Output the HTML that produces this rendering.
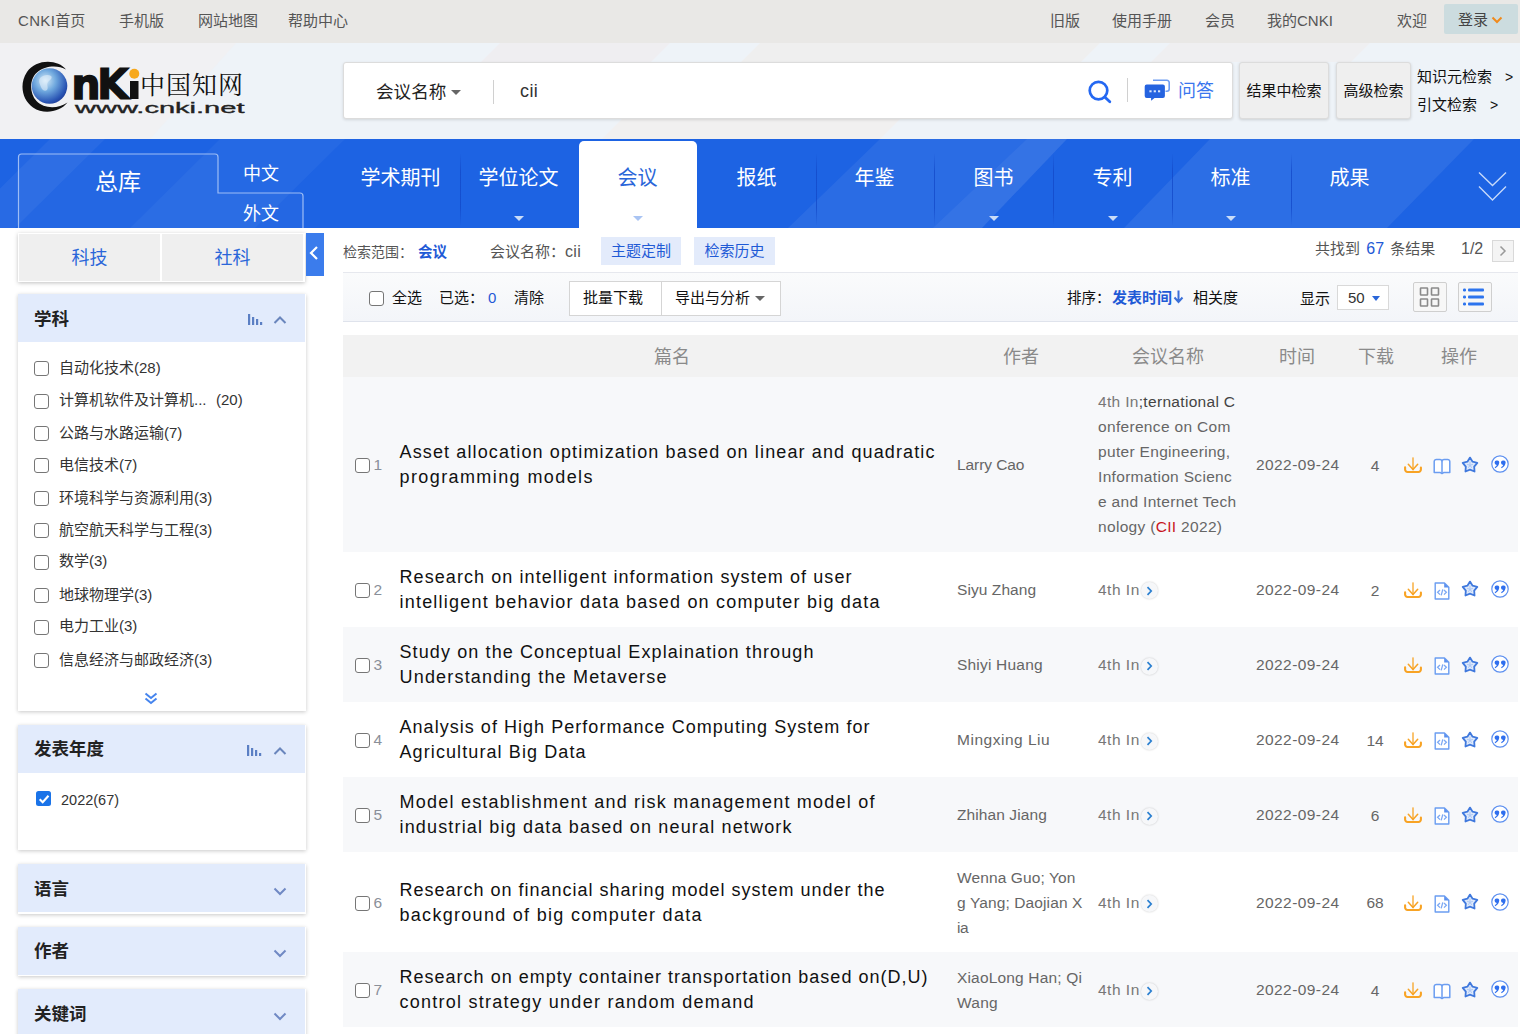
<!DOCTYPE html>
<html lang="zh-CN">
<head>
<meta charset="utf-8">
<title>CNKI</title>
<style>
*{box-sizing:border-box;margin:0;padding:0}
html,body{width:1520px;height:1034px;overflow:hidden;background:#fff}
body{font-family:"Liberation Sans","Noto Sans CJK SC",sans-serif;color:#333;position:relative}
.abs{position:absolute;white-space:nowrap}
/* top bar */
#top{position:absolute;left:0;top:0;width:1520px;height:43px;background:#e9e8e6}
#top>span{position:absolute;top:0;line-height:41px;font-size:15px;color:#555;white-space:nowrap}
/* header */
#hdr{position:absolute;left:0;top:43px;width:1520px;height:96px;background:#eef3f8}
#sbox{position:absolute;left:343px;top:62px;width:890px;height:57px;background:#fff;border:1px solid #dcdcdc;border-radius:3px;box-shadow:0 1px 3px rgba(0,0,0,.12)}
.hbtn{position:absolute;top:62px;height:57px;background:#efefef;border:1px solid #dcdcdc;border-radius:3px;box-shadow:0 1px 3px rgba(0,0,0,.15);font-size:15px;color:#111;text-align:center;line-height:55px;white-space:nowrap}
/* nav */
#nav{position:absolute;left:0;top:139px;width:1520px;height:89px;background:#1d63e3}
.nv{position:absolute;top:164px;width:119px;text-align:center;font-size:20px;color:#fff;line-height:28px;white-space:nowrap}
.sep{position:absolute;top:153px;width:1px;height:73px;background:linear-gradient(180deg,rgba(18,72,200,0),rgba(18,72,200,.75) 25%,rgba(18,72,200,.75) 75%,rgba(18,72,200,0))}
.tri{position:absolute;top:216px;width:0;height:0;border-left:5px solid transparent;border-right:5px solid transparent;border-top:5px solid #c9dcf8}
/* sidebar */
.panel{position:absolute;left:18px;width:288px;background:#fff;box-shadow:0 1px 4px rgba(0,0,0,.22)}
.phd{position:absolute;left:18px;width:287px;height:48px;background:#e2ebfc;font-size:17.5px;font-weight:bold;color:#222;line-height:48px;padding-left:16px;padding-top:.5px}
.cb{position:absolute;width:15px;height:15px;border:1.5px solid #767676;border-radius:3px;background:#fff}
.li{position:absolute;left:59px;font-size:15px;color:#333;line-height:20px;white-space:nowrap}
/* table */
.row{position:absolute;left:343px;width:1175px}
.g{background:#f7f8fa}
.tt{position:absolute;left:399.5px;font-size:18px;line-height:25px;color:#111;white-space:nowrap}
.au{position:absolute;left:957px;font-size:15.5px;line-height:25px;color:#666;white-space:nowrap}
.cf{position:absolute;left:1098px;font-size:15.5px;line-height:25px;color:#666;white-space:nowrap;letter-spacing:.32px}
.dt{position:absolute;left:1256px;font-size:15.5px;line-height:25px;color:#666;white-space:nowrap;letter-spacing:.42px}
.dl{position:absolute;left:1355px;width:40px;text-align:center;font-size:15.5px;line-height:25px;color:#666}
.no{position:absolute;left:373.5px;font-size:15.5px;color:#8a8f99;line-height:20px}
.th{position:absolute;top:335.5px;line-height:42px;font-size:18px;color:#8a8a8a;text-align:center;white-space:nowrap}
</style>
</head>
<body>
<!-- TOPBAR -->
<div id="top">
<span style="left:18px"><span style="letter-spacing:.35px">CNKI</span>首页</span><span style="left:119px">手机版</span><span style="left:198px">网站地图</span><span style="left:288px">帮助中心</span>
<span style="left:1050px">旧版</span><span style="left:1112px">使用手册</span><span style="left:1205px">会员</span><span style="left:1267px">我的CNKI</span><span style="left:1397px">欢迎</span>
<div style="position:absolute;left:1444px;top:4px;width:74px;height:30px;background:#ccdcdf;border-radius:2px"></div>
<span style="left:1458px;top:-1px;color:#444">登录</span>
<svg style="position:absolute;left:1491px;top:16px" width="12" height="8" viewBox="0 0 12 8"><path d="M1.5 1.5 L6 6 L10.5 1.5" fill="none" stroke="#f08a1c" stroke-width="2"/></svg>
</div>
<!-- HEADER -->
<div id="hdr"></div><svg class="abs" style="left:0;top:43px" width="1520" height="96" viewBox="0 0 1520 96"><polygon points="0,0 236,0 150,96 0,96" fill="#f1f1f3"/><polygon points="500,0 670,0 651,19 481,19" fill="#efeef1"/><polygon points="760,0 1100,0 1081,19 741,19" fill="#efefef"/><polygon points="1170,0 1370,0 1351,19 1151,19" fill="#efeff1"/><polygon points="622,76 900,76 880,96 602,96" fill="#f1f0f0"/></svg>
<!--LOGO-->
<svg class="abs" style="left:20px;top:58px" width="232" height="62" viewBox="20 58 232 62">
<defs><radialGradient id="gl" cx="38%" cy="35%" r="75%"><stop offset="0" stop-color="#d6ebf8"/><stop offset=".4" stop-color="#6fa8de"/><stop offset=".8" stop-color="#2a55b4"/><stop offset="1" stop-color="#1a338c"/></radialGradient></defs>
<path d="M66 69.5 C58 59 36 58.5 27 72 C19 84 22 100 33 107.5 C44 115 60 112 67.5 102.5 C58 109 44 109 36.5 101 C29 93 29.5 79 37 72.5 C45 65.5 58 65 66 69.5 Z" fill="#111"/>
<circle cx="49.5" cy="86" r="17.8" fill="url(#gl)"/>
<path d="M40 78 c3 -3 8 -4 11 -2 c2 2 -1 4 -3 6 c-2 3 1 5 -1 8 c-2 2 -5 0 -6 -3 c-1 -3 -3 -6 -1 -9 z" fill="#e8f3fb" opacity=".55"/>
<text x="71.5" y="99" font-family="'DejaVu Sans','Liberation Sans',sans-serif" font-weight="bold" font-size="43" fill="#111" stroke="#111" stroke-width="1.6" textLength="29" lengthAdjust="spacingAndGlyphs">n</text>
<text x="97" y="99" font-family="'DejaVu Sans','Liberation Sans',sans-serif" font-weight="bold" font-size="42.5" fill="#111" stroke="#111" stroke-width="1.2" textLength="32" lengthAdjust="spacingAndGlyphs">K</text>
<rect x="130" y="81" width="8.5" height="18" fill="#111"/>
<circle cx="134.3" cy="73.7" r="5" fill="#f7a81b"/>
<text x="140" y="94" font-family="'Noto Serif CJK SC',serif" font-weight="400" font-size="25" fill="#111" textLength="103" lengthAdjust="spacing">中国知网</text>
<text x="75" y="112.6" font-family="'Liberation Sans',sans-serif" font-weight="normal" font-size="15.5" fill="#222" stroke="#222" stroke-width=".35" textLength="169.5" lengthAdjust="spacingAndGlyphs">www.cnki.net</text>
</svg>
<!--SEARCH-->
<div id="sbox"></div>
<div class="abs" style="left:376px;top:78px;font-size:17.6px;line-height:28px;color:#222">会议名称</div>
<div class="abs" style="left:451px;top:90px;width:0;height:0;border-left:5px solid transparent;border-right:5px solid transparent;border-top:5px solid #666"></div>
<div class="abs" style="left:493px;top:80px;width:1px;height:24px;background:#d0d0d0"></div>
<div class="abs" style="left:520px;top:77px;font-size:18px;line-height:28px;color:#333;letter-spacing:.4px">cii</div>
<svg class="abs" style="left:1086px;top:78px" width="28" height="28" viewBox="0 0 28 28"><circle cx="12.5" cy="12.6" r="8.8" fill="none" stroke="#2468f2" stroke-width="2.7"/><path d="M19 19.2 L23.8 23.8" stroke="#2468f2" stroke-width="2.8" stroke-linecap="round"/></svg>
<div class="abs" style="left:1127px;top:78px;width:1px;height:24px;background:#d0d0d0"></div>
<svg class="abs" style="left:1143px;top:79px" width="28" height="23" viewBox="0 0 28 23"><path d="M10 1.3 h14 a2.2 2.2 0 0 1 2.2 2.2 v6.5 a2.2 2.2 0 0 1 -2.2 2.2 h-1.5" fill="none" stroke="#6d9cf2" stroke-width="1.6"/><path d="M3.7 5.6 h16.2 a2 2 0 0 1 2 2 v9.4 a2 2 0 0 1 -2 2 h-8.4 l-3.4 2.7 v-2.7 h-4.4 a2 2 0 0 1 -2 -2 v-9.4 a2 2 0 0 1 2 -2 z" fill="#2563e0"/><rect x="6.4" y="11.3" width="2.2" height="2" fill="#dbe7fc"/><rect x="10.7" y="11.3" width="2.2" height="2" fill="#dbe7fc"/><rect x="15" y="11.3" width="2.2" height="2" fill="#dbe7fc"/></svg>
<div class="abs" style="left:1178px;top:77px;font-size:18px;line-height:28px;color:#3a76ee">问答</div>
<div class="hbtn" style="left:1239px;width:90px">结果中检索</div>
<div class="hbtn" style="left:1336px;width:75px">高级检索</div>
<div class="abs" style="left:1417px;top:67px;font-size:15px;line-height:20px;color:#111">知识元检索</div><div class="abs" style="left:1505px;top:67px;font-size:14px;line-height:20px;color:#111">&gt;</div>
<div class="abs" style="left:1417px;top:95px;font-size:15px;line-height:20px;color:#111">引文检索</div><div class="abs" style="left:1490px;top:95px;font-size:14px;line-height:20px;color:#111">&gt;</div>
<!--NAV-->
<div id="nav"></div><svg class="abs" style="left:0;top:139px" width="1520" height="89" viewBox="0 0 1520 89"><g fill="#fff"><polygon points="-40,89 50,0 105,0 15,89" opacity=".05"/><polygon points="130,89 220,0 345,0 255,89" opacity=".04"/><polygon points="788,89 880,0 1067,0 982,89" opacity=".06"/><polygon points="933,89 1027,0 1067,0 982,89" opacity=".05"/><polygon points="1124,89 1210,0 1474,0 1387,89" opacity=".07"/></g></svg>
<svg class="abs" style="left:0;top:139px" width="320" height="89" viewBox="0 0 320 89"><path d="M18.5 89 V18 a3 3 0 0 1 3 -3 H215 a3 3 0 0 1 3 3 V54 H300 a3 3 0 0 1 3 3 V89" fill="rgba(255,255,255,.03)" stroke="#9dbdf5" stroke-width="1.2"/></svg>
<div class="abs" style="left:18px;top:166px;width:200px;text-align:center;font-size:23px;line-height:32px;color:#fff">总库</div>
<div class="abs" style="left:218px;top:161px;width:86px;text-align:center;font-size:18px;line-height:26px;color:#fff">中文</div>
<div class="abs" style="left:218px;top:201px;width:86px;text-align:center;font-size:18px;line-height:26px;color:#fff">外文</div>
<div class="abs" style="left:579px;top:141px;width:118px;height:87px;background:#fff;border-radius:5px 5px 0 0"></div>
<div class="nv" style="left:341px;color:#fff">学术期刊</div>
<div class="nv" style="left:459px;color:#fff">学位论文</div>
<div class="nv" style="left:578px;color:#2a66d9">会议</div>
<div class="nv" style="left:697px;color:#fff">报纸</div>
<div class="nv" style="left:815px;color:#fff">年鉴</div>
<div class="nv" style="left:934px;color:#fff">图书</div>
<div class="nv" style="left:1053px;color:#fff">专利</div>
<div class="nv" style="left:1171px;color:#fff">标准</div>
<div class="nv" style="left:1290px;color:#fff">成果</div>
<div class="sep" style="left:460px"></div>
<div class="sep" style="left:816px"></div>
<div class="sep" style="left:934px"></div>
<div class="sep" style="left:1053px"></div>
<div class="sep" style="left:1172px"></div>
<div class="sep" style="left:1291px"></div>
<div class="tri" style="left:514px"></div>
<div class="tri" style="left:989px"></div>
<div class="tri" style="left:1108px"></div>
<div class="tri" style="left:1226px"></div>
<div class="tri" style="left:633px;border-top-color:#a9c4f3"></div>
<svg class="abs" style="left:1476px;top:170px" width="32" height="32" viewBox="0 0 32 32"><path d="M3 2.5 L16.5 15.5 L30 2.5 M3 16.5 L16.5 30 L30 16.5" fill="none" stroke="#c6d9fa" stroke-width="1.4"/></svg>
<!--SIDEBAR-->
<div class="abs" style="left:18px;top:233px;width:287px;height:49px;background:#fff;box-shadow:0 1px 4px rgba(0,0,0,.25)"></div>
<div class="abs" style="left:19px;top:234px;width:141px;height:47px;background:#efefef;text-align:center;font-size:18px;line-height:48px;color:#2a66d9">科技</div>
<div class="abs" style="left:162px;top:234px;width:141px;height:47px;background:#efefef;text-align:center;font-size:18px;line-height:48px;color:#2a66d9">社科</div>
<div class="abs" style="left:306px;top:233px;width:18px;height:43px;background:#3b7cec"></div>
<svg class="abs" style="left:308px;top:245px" width="12" height="16" viewBox="0 0 12 16"><path d="M9 2 L3 8 L9 14" fill="none" stroke="#fff" stroke-width="2.2"/></svg>
<div class="panel" style="top:294px;height:417px"></div>
<div class="phd" style="top:294px">学科</div>
<svg class="abs" style="left:248px;top:314px" width="16" height="12" viewBox="0 0 16 12"><rect x="0" y="0" width="2.2" height="11" fill="#5b7fc4"/><rect x="4" y="3" width="2.2" height="8" fill="#5b7fc4"/><rect x="8" y="5" width="2.2" height="6" fill="#5b7fc4"/><rect x="12" y="8" width="2.2" height="3" fill="#5b7fc4"/></svg>
<svg class="abs" style="left:273px;top:315px" width="14" height="10" viewBox="0 0 14 10"><path d="M1.5 8 L7 2.5 L12.5 8" fill="none" stroke="#6a86bd" stroke-width="2"/></svg>
<div class="cb" style="left:34px;top:361.0px"></div><div class="li" style="top:357.5px">自动化技术(28)</div>
<div class="cb" style="left:34px;top:393.5px"></div><div class="li" style="top:390.0px">计算机软件及计算机...<span style="position:absolute;left:157px">(20)</span></div>
<div class="cb" style="left:34px;top:426.0px"></div><div class="li" style="top:422.5px">公路与水路运输(7)</div>
<div class="cb" style="left:34px;top:458.0px"></div><div class="li" style="top:454.5px">电信技术(7)</div>
<div class="cb" style="left:34px;top:491.0px"></div><div class="li" style="top:487.5px">环境科学与资源利用(3)</div>
<div class="cb" style="left:34px;top:523.0px"></div><div class="li" style="top:519.5px">航空航天科学与工程(3)</div>
<div class="cb" style="left:34px;top:554.9px"></div><div class="li" style="top:551.4px">数学(3)</div>
<div class="cb" style="left:34px;top:588.0px"></div><div class="li" style="top:584.5px">地球物理学(3)</div>
<div class="cb" style="left:34px;top:619.9px"></div><div class="li" style="top:616.4px">电力工业(3)</div>
<div class="cb" style="left:34px;top:653.0px"></div><div class="li" style="top:649.5px">信息经济与邮政经济(3)</div>
<svg class="abs" style="left:144px;top:692px" width="14" height="13" viewBox="0 0 14 13"><path d="M1.5 1.5 L7 6 L12.5 1.5 M1.5 6.5 L7 11 L12.5 6.5" fill="none" stroke="#4685ee" stroke-width="2"/></svg>
<div class="panel" style="top:724.7px;height:125.3px"></div>
<div class="phd" style="top:724.7px">发表年度</div>
<svg class="abs" style="left:247px;top:745px" width="16" height="12" viewBox="0 0 16 12"><rect x="0" y="0" width="2.2" height="11" fill="#5b7fc4"/><rect x="4" y="3" width="2.2" height="8" fill="#5b7fc4"/><rect x="8" y="5" width="2.2" height="6" fill="#5b7fc4"/><rect x="12" y="8" width="2.2" height="3" fill="#5b7fc4"/></svg>
<svg class="abs" style="left:273px;top:746px" width="14" height="10" viewBox="0 0 14 10"><path d="M1.5 8 L7 2.5 L12.5 8" fill="none" stroke="#6a86bd" stroke-width="2"/></svg>
<div class="abs" style="left:36.3px;top:791.3px;width:14.4px;height:14.4px;background:#1a73e8;border-radius:2.5px"></div><svg class="abs" style="left:36.5px;top:791.5px" width="14" height="14" viewBox="0 0 14 14"><path d="M2.7 7.3 L5.7 10.3 L11.5 3.7" fill="none" stroke="#fff" stroke-width="2.1"/></svg>
<div class="li" style="left:61px;top:789.7px;font-size:14.5px">2022(67)</div>
<div class="panel" style="top:864.3px;height:49.5px"></div><div class="phd" style="top:864.3px">语言</div>
<svg class="abs" style="left:273px;top:886px" width="14" height="10" viewBox="0 0 14 10"><path d="M1.5 2.5 L7 8 L12.5 2.5" fill="none" stroke="#7089c4" stroke-width="2"/></svg>
<div class="panel" style="top:926.6px;height:49.5px"></div><div class="phd" style="top:926.6px">作者</div>
<svg class="abs" style="left:273px;top:948px" width="14" height="10" viewBox="0 0 14 10"><path d="M1.5 2.5 L7 8 L12.5 2.5" fill="none" stroke="#7089c4" stroke-width="2"/></svg>
<div class="panel" style="top:989.3px;height:49.5px"></div><div class="phd" style="top:989.3px">关键词</div>
<svg class="abs" style="left:273px;top:1011px" width="14" height="10" viewBox="0 0 14 10"><path d="M1.5 2.5 L7 8 L12.5 2.5" fill="none" stroke="#7089c4" stroke-width="2"/></svg>
<!--MAIN-->
<div class="abs" style="left:343px;top:241.5px;font-size:14px;line-height:20px;color:#555">检索范围：<b style="color:#1f5ad6;font-size:14.5px;margin-left:5px">会议</b></div>
<div class="abs" style="left:490px;top:241.5px;font-size:15px;line-height:20px;color:#555">会议名称：<span style="font-size:16px;letter-spacing:.3px">cii</span></div>
<div class="abs" style="left:601px;top:237px;width:80px;height:28px;background:#e3ebfb;text-align:center;font-size:15px;line-height:28px;color:#1f5ad6">主题定制</div>
<div class="abs" style="left:694px;top:237px;width:81px;height:28px;background:#e3ebfb;text-align:center;font-size:15px;line-height:28px;color:#1f5ad6">检索历史</div>
<div class="abs" style="left:1315px;top:239px;font-size:15px;line-height:20px;color:#555">共找到 <span style="color:#1f5ad6;font-size:16px;margin:0 1.5px 0 2px;letter-spacing:.3px">67</span> 条结果</div>
<div class="abs" style="left:1461px;top:239px;font-size:16px;line-height:20px;color:#555">1/2</div>
<div class="abs" style="left:1492px;top:240px;width:22px;height:22px;background:#f4f4f4;border:1px solid #d9d9d9"></div><svg class="abs" style="left:1499px;top:245px" width="8" height="12" viewBox="0 0 8 12"><path d="M1.5 1.5 L6 6 L1.5 10.5" fill="none" stroke="#999" stroke-width="1.5"/></svg>
<div class="abs" style="left:343px;top:272px;width:1175px;height:50px;background:linear-gradient(180deg,#fafbfc,#f3f5f9);border-top:1px solid #e6e8ee;border-bottom:1px solid #dfe3ec"></div>
<div class="cb" style="left:369px;top:291px"></div>
<div class="abs" style="left:392px;top:288px;font-size:15px;line-height:20px;color:#111">全选</div>
<div class="abs" style="left:439px;top:288px;font-size:15px;line-height:20px;color:#111">已选：</div>
<div class="abs" style="left:488px;top:288px;font-size:15px;line-height:20px;color:#1f5ad6">0</div>
<div class="abs" style="left:514px;top:288px;font-size:15px;line-height:20px;color:#111">清除</div>
<div class="abs" style="left:569px;top:281px;width:93px;height:35px;background:#fff;border:1px solid #d5d5d5;padding-left:13px;font-size:15px;line-height:32px;color:#111">批量下载</div>
<div class="abs" style="left:661px;top:281px;width:120px;height:35px;background:#fff;border:1px solid #d5d5d5;padding-left:13px;font-size:15px;line-height:32px;color:#111">导出与分析</div>
<div class="abs" style="left:755px;top:295.5px;width:0;height:0;border-left:5px solid transparent;border-right:5px solid transparent;border-top:5.5px solid #666"></div>
<div class="abs" style="left:1067px;top:288px;font-size:14.5px;line-height:20px;color:#111">排序：</div>
<div class="abs" style="left:1112px;top:288px;font-size:15px;line-height:20px;color:#1f5ad6;font-weight:bold">发表时间</div>
<svg class="abs" style="left:1173px;top:290px" width="11" height="14" viewBox="0 0 11 14"><path d="M5.5 0.5 V11 M1.5 7.5 L5.5 12 L9.5 7.5" fill="none" stroke="#3a6fd8" stroke-width="2"/></svg>
<div class="abs" style="left:1193px;top:288px;font-size:15px;line-height:20px;color:#111">相关度</div>
<div class="abs" style="left:1300px;top:289px;font-size:15px;line-height:20px;color:#111">显示</div>
<div class="abs" style="left:1337px;top:285px;width:52px;height:25px;background:#fff;border:1px solid #d9d9d9;padding-left:10px;font-size:15px;line-height:23.5px;color:#333">50</div>
<div class="abs" style="left:1372px;top:296px;width:0;height:0;border-left:4.5px solid transparent;border-right:4.5px solid transparent;border-top:5.5px solid #2a66d9"></div>
<div class="abs" style="left:1413px;top:282px;width:34px;height:30px;background:#f7f7f7;border:1px solid #cfcfcf;border-radius:2px"></div>
<svg class="abs" style="left:1419px;top:287px" width="22" height="20" viewBox="0 0 22 20"><g fill="none" stroke="#8a8a8a" stroke-width="1.6"><rect x="1.5" y="1" width="7" height="7" rx=".5"/><rect x="12.5" y="1" width="7" height="7" rx=".5"/><rect x="1.5" y="12" width="7" height="7" rx=".5"/><rect x="12.5" y="12" width="7" height="7" rx=".5"/></g></svg>
<div class="abs" style="left:1458px;top:282px;width:34px;height:30px;background:#f7f7f7;border:1px solid #cfcfcf;border-radius:2px"></div>
<svg class="abs" style="left:1463px;top:288px" width="24" height="18" viewBox="0 0 24 18"><g fill="#2d74ee"><rect x="0" y="0.5" width="3" height="3" rx="1.2"/><rect x="5" y="0.5" width="16" height="3" rx="1"/><rect x="0" y="7.5" width="3" height="3" rx="1.2"/><rect x="5" y="7.5" width="16" height="3" rx="1"/><rect x="0" y="14.5" width="3" height="3" rx="1.2"/><rect x="5" y="14.5" width="16" height="3" rx="1"/></g></svg>
<div class="abs" style="left:343px;top:334.5px;width:1175px;height:42.5px;background:#f2f2f2"></div>
<div class="th" style="left:622px;width:100px">篇名</div>
<div class="th" style="left:971px;width:100px">作者</div>
<div class="th" style="left:1118px;width:100px">会议名称</div>
<div class="th" style="left:1247px;width:100px">时间</div>
<div class="th" style="left:1326px;width:100px">下载</div>
<div class="th" style="left:1409px;width:100px">操作</div>
<div class="row g" style="top:377px;height:174.5px"></div>
<div class="cb" style="left:354.5px;top:457.9px"></div><div class="no" style="top:454.9px">1</div>
<div class="tt" style="top:439.9px"><span style="letter-spacing:1.133px">Asset allocation optimization based on linear and quadratic</span><br><span style="letter-spacing:1.407px">programming models</span></div>
<div class="au" style="top:452.2px"><span style="letter-spacing:-0.070px">Larry Cao</span></div>
<div class="cf" style="top:388.6px"><span style="color:#777">4th In</span><span style="color:#444">;ternational C</span><br>onference on Com<br>puter Engineering,<br>Information Scienc<br>e and Internet Tech<br>nology (<span style="color:#c8161d">CII</span> 2022)</div>
<div class="dt" style="top:452.2px">2022-09-24</div>
<div class="dl" style="top:452.8px">4</div>
<svg class="abs" style="left:1404px;top:457.1px" width="18" height="18" viewBox="0 0 18 18"><g fill="none" stroke="#f8a324" stroke-linecap="round" stroke-linejoin="round"><path d="M9 0.8 V12.5" stroke-width="1.3"/><path d="M4.3 7.3 L9 12.6 L13.7 7.3" stroke-width="1.5"/><path d="M1.1 10.3 V12.6 a2.4 2.4 0 0 0 2.4 2.4 H14.5 a2.4 2.4 0 0 0 2.4 -2.4 V10.5" stroke-width="2.1"/></g></svg>
<svg class="abs" style="left:1433px;top:456.9px" width="18" height="18" viewBox="0 0 18 18"><path d="M1.2 4.6 a2.2 2.2 0 0 1 2.2 -2.2 H6.8 a2.2 2.2 0 0 1 2.2 2.2 a2.2 2.2 0 0 1 2.2 -2.2 H14.6 a2.2 2.2 0 0 1 2.2 2.2 V15.6 H10.6 L9 16.6 L7.4 15.6 H1.2 Z" fill="#fff" stroke="#6b9df1" stroke-width="1.5" stroke-linejoin="round"/><path d="M9 4.6 V16" stroke="#6b9df1" stroke-width="1.5"/></svg>
<svg class="abs" style="left:1461.2px;top:455.6px" width="18" height="18" viewBox="0 0 18 18"><path d="M9.00 1.60 L11.59 5.74 L16.32 6.92 L13.18 10.66 L13.53 15.53 L9.00 13.70 L4.47 15.53 L4.82 10.66 L1.68 6.92 L6.41 5.74 Z" fill="#dfeafb" stroke="#4079dd" stroke-width="1.8" stroke-linejoin="round"/><path d="M9 5.6 V9.3 M9 9.3 L6.2 8.4 M9 9.3 L11.8 8.4 M9 9.3 L7.3 11.8 M9 9.3 L10.7 11.8" fill="none" stroke="#a9c5f5" stroke-width="1"/></svg>
<svg class="abs" style="left:1491px;top:455.0px" width="18" height="18" viewBox="0 0 18 18"><circle cx="9" cy="9" r="8.2" fill="#fff" stroke="#5d90f0" stroke-width="1.2"/><g transform="translate(9 9.3) scale(1.28) translate(-9.15 -8.4)"><path d="M4.9 7.2 a1.8 1.8 0 1 1 3.5 .6 c-.3 1.7 -1.4 3 -3 3.6 l-.4 -.8 c.8 -.4 1.4 -1 1.6 -1.7 a1.8 1.8 0 0 1 -1.7 -1.7 z M9.9 7.2 a1.8 1.8 0 1 1 3.5 .6 c-.3 1.7 -1.4 3 -3 3.6 l-.4 -.8 c.8 -.4 1.4 -1 1.6 -1.7 a1.8 1.8 0 0 1 -1.7 -1.7 z" fill="#2f6fee"/></g></svg>
<div class="cb" style="left:354.5px;top:582.9px"></div><div class="no" style="top:579.9px">2</div>
<div class="tt" style="top:564.9px"><span style="letter-spacing:1.077px">Research on intelligent information system of user</span><br><span style="letter-spacing:1.210px">intelligent behavior data based on computer big data</span></div>
<div class="au" style="top:577.1px"><span style="letter-spacing:0.075px">Siyu Zhang</span></div>
<div class="cf" style="top:577.1px;color:#777;letter-spacing:.5px">4th In</div>
<div class="abs" style="left:1141px;top:582.4px;width:17px;height:17px;border-radius:9px;background:#f6f7f9;box-shadow:0 0 2px rgba(0,0,0,.22)"></div><svg class="abs" style="left:1146px;top:585.9px" width="7" height="10" viewBox="0 0 7 10"><path d="M1.5 1.2 L5.2 5 L1.5 8.8" fill="none" stroke="#2a7fd0" stroke-width="1.7"/></svg>
<div class="dt" style="top:577.1px">2022-09-24</div>
<div class="dl" style="top:577.6px">2</div>
<svg class="abs" style="left:1404px;top:582.0px" width="18" height="18" viewBox="0 0 18 18"><g fill="none" stroke="#f8a324" stroke-linecap="round" stroke-linejoin="round"><path d="M9 0.8 V12.5" stroke-width="1.3"/><path d="M4.3 7.3 L9 12.6 L13.7 7.3" stroke-width="1.5"/><path d="M1.1 10.3 V12.6 a2.4 2.4 0 0 0 2.4 2.4 H14.5 a2.4 2.4 0 0 0 2.4 -2.4 V10.5" stroke-width="2.1"/></g></svg>
<svg class="abs" style="left:1433px;top:581.9px" width="18" height="18" viewBox="0 0 18 18"><path d="M2.2 1 H11.5 L15.8 5.2 V17 H2.2 Z" fill="#fff" stroke="#6b9df1" stroke-width="1.4" stroke-linejoin="round"/><path d="M11.2 1 L15.8 5.4 H11.2 Z" fill="#5b90ee"/><path d="M7 8 L4.6 10.3 L7 12.6 M11 8 L13.4 10.3 L11 12.6 M9.8 7.3 L8.2 13.3" fill="none" stroke="#7ba8f3" stroke-width="1.3"/></svg>
<svg class="abs" style="left:1461.2px;top:580.4px" width="18" height="18" viewBox="0 0 18 18"><path d="M9.00 1.60 L11.59 5.74 L16.32 6.92 L13.18 10.66 L13.53 15.53 L9.00 13.70 L4.47 15.53 L4.82 10.66 L1.68 6.92 L6.41 5.74 Z" fill="#dfeafb" stroke="#4079dd" stroke-width="1.8" stroke-linejoin="round"/><path d="M9 5.6 V9.3 M9 9.3 L6.2 8.4 M9 9.3 L11.8 8.4 M9 9.3 L7.3 11.8 M9 9.3 L10.7 11.8" fill="none" stroke="#a9c5f5" stroke-width="1"/></svg>
<svg class="abs" style="left:1491px;top:579.9px" width="18" height="18" viewBox="0 0 18 18"><circle cx="9" cy="9" r="8.2" fill="#fff" stroke="#5d90f0" stroke-width="1.2"/><g transform="translate(9 9.3) scale(1.28) translate(-9.15 -8.4)"><path d="M4.9 7.2 a1.8 1.8 0 1 1 3.5 .6 c-.3 1.7 -1.4 3 -3 3.6 l-.4 -.8 c.8 -.4 1.4 -1 1.6 -1.7 a1.8 1.8 0 0 1 -1.7 -1.7 z M9.9 7.2 a1.8 1.8 0 1 1 3.5 .6 c-.3 1.7 -1.4 3 -3 3.6 l-.4 -.8 c.8 -.4 1.4 -1 1.6 -1.7 a1.8 1.8 0 0 1 -1.7 -1.7 z" fill="#2f6fee"/></g></svg>
<div class="row g" style="top:626.8px;height:75.1px"></div>
<div class="cb" style="left:354.5px;top:658.0px"></div><div class="no" style="top:655.0px">3</div>
<div class="tt" style="top:640.0px"><span style="letter-spacing:1.110px">Study on the Conceptual Explaination through</span><br><span style="letter-spacing:1.187px">Understanding the Metaverse</span></div>
<div class="au" style="top:652.3px"><span style="letter-spacing:0.202px">Shiyi Huang</span></div>
<div class="cf" style="top:652.3px;color:#777;letter-spacing:.5px">4th In</div>
<div class="abs" style="left:1141px;top:657.5px;width:17px;height:17px;border-radius:9px;background:#f6f7f9;box-shadow:0 0 2px rgba(0,0,0,.22)"></div><svg class="abs" style="left:1146px;top:661.0px" width="7" height="10" viewBox="0 0 7 10"><path d="M1.5 1.2 L5.2 5 L1.5 8.8" fill="none" stroke="#2a7fd0" stroke-width="1.7"/></svg>
<div class="dt" style="top:652.3px">2022-09-24</div>
<svg class="abs" style="left:1404px;top:657.2px" width="18" height="18" viewBox="0 0 18 18"><g fill="none" stroke="#f8a324" stroke-linecap="round" stroke-linejoin="round"><path d="M9 0.8 V12.5" stroke-width="1.3"/><path d="M4.3 7.3 L9 12.6 L13.7 7.3" stroke-width="1.5"/><path d="M1.1 10.3 V12.6 a2.4 2.4 0 0 0 2.4 2.4 H14.5 a2.4 2.4 0 0 0 2.4 -2.4 V10.5" stroke-width="2.1"/></g></svg>
<svg class="abs" style="left:1433px;top:657.0px" width="18" height="18" viewBox="0 0 18 18"><path d="M2.2 1 H11.5 L15.8 5.2 V17 H2.2 Z" fill="#fff" stroke="#6b9df1" stroke-width="1.4" stroke-linejoin="round"/><path d="M11.2 1 L15.8 5.4 H11.2 Z" fill="#5b90ee"/><path d="M7 8 L4.6 10.3 L7 12.6 M11 8 L13.4 10.3 L11 12.6 M9.8 7.3 L8.2 13.3" fill="none" stroke="#7ba8f3" stroke-width="1.3"/></svg>
<svg class="abs" style="left:1461.2px;top:655.6px" width="18" height="18" viewBox="0 0 18 18"><path d="M9.00 1.60 L11.59 5.74 L16.32 6.92 L13.18 10.66 L13.53 15.53 L9.00 13.70 L4.47 15.53 L4.82 10.66 L1.68 6.92 L6.41 5.74 Z" fill="#dfeafb" stroke="#4079dd" stroke-width="1.8" stroke-linejoin="round"/><path d="M9 5.6 V9.3 M9 9.3 L6.2 8.4 M9 9.3 L11.8 8.4 M9 9.3 L7.3 11.8 M9 9.3 L10.7 11.8" fill="none" stroke="#a9c5f5" stroke-width="1"/></svg>
<svg class="abs" style="left:1491px;top:655.1px" width="18" height="18" viewBox="0 0 18 18"><circle cx="9" cy="9" r="8.2" fill="#fff" stroke="#5d90f0" stroke-width="1.2"/><g transform="translate(9 9.3) scale(1.28) translate(-9.15 -8.4)"><path d="M4.9 7.2 a1.8 1.8 0 1 1 3.5 .6 c-.3 1.7 -1.4 3 -3 3.6 l-.4 -.8 c.8 -.4 1.4 -1 1.6 -1.7 a1.8 1.8 0 0 1 -1.7 -1.7 z M9.9 7.2 a1.8 1.8 0 1 1 3.5 .6 c-.3 1.7 -1.4 3 -3 3.6 l-.4 -.8 c.8 -.4 1.4 -1 1.6 -1.7 a1.8 1.8 0 0 1 -1.7 -1.7 z" fill="#2f6fee"/></g></svg>
<div class="cb" style="left:354.5px;top:733.0px"></div><div class="no" style="top:730.0px">4</div>
<div class="tt" style="top:715.0px"><span style="letter-spacing:1.038px">Analysis of High Performance Computing System for</span><br><span style="letter-spacing:1.096px">Agricultural Big Data</span></div>
<div class="au" style="top:727.3px"><span style="letter-spacing:0.515px">Mingxing Liu</span></div>
<div class="cf" style="top:727.3px;color:#777;letter-spacing:.5px">4th In</div>
<div class="abs" style="left:1141px;top:732.5px;width:17px;height:17px;border-radius:9px;background:#f6f7f9;box-shadow:0 0 2px rgba(0,0,0,.22)"></div><svg class="abs" style="left:1146px;top:736.0px" width="7" height="10" viewBox="0 0 7 10"><path d="M1.5 1.2 L5.2 5 L1.5 8.8" fill="none" stroke="#2a7fd0" stroke-width="1.7"/></svg>
<div class="dt" style="top:727.3px">2022-09-24</div>
<div class="dl" style="top:727.8px">14</div>
<svg class="abs" style="left:1404px;top:732.2px" width="18" height="18" viewBox="0 0 18 18"><g fill="none" stroke="#f8a324" stroke-linecap="round" stroke-linejoin="round"><path d="M9 0.8 V12.5" stroke-width="1.3"/><path d="M4.3 7.3 L9 12.6 L13.7 7.3" stroke-width="1.5"/><path d="M1.1 10.3 V12.6 a2.4 2.4 0 0 0 2.4 2.4 H14.5 a2.4 2.4 0 0 0 2.4 -2.4 V10.5" stroke-width="2.1"/></g></svg>
<svg class="abs" style="left:1433px;top:732.0px" width="18" height="18" viewBox="0 0 18 18"><path d="M2.2 1 H11.5 L15.8 5.2 V17 H2.2 Z" fill="#fff" stroke="#6b9df1" stroke-width="1.4" stroke-linejoin="round"/><path d="M11.2 1 L15.8 5.4 H11.2 Z" fill="#5b90ee"/><path d="M7 8 L4.6 10.3 L7 12.6 M11 8 L13.4 10.3 L11 12.6 M9.8 7.3 L8.2 13.3" fill="none" stroke="#7ba8f3" stroke-width="1.3"/></svg>
<svg class="abs" style="left:1461.2px;top:730.6px" width="18" height="18" viewBox="0 0 18 18"><path d="M9.00 1.60 L11.59 5.74 L16.32 6.92 L13.18 10.66 L13.53 15.53 L9.00 13.70 L4.47 15.53 L4.82 10.66 L1.68 6.92 L6.41 5.74 Z" fill="#dfeafb" stroke="#4079dd" stroke-width="1.8" stroke-linejoin="round"/><path d="M9 5.6 V9.3 M9 9.3 L6.2 8.4 M9 9.3 L11.8 8.4 M9 9.3 L7.3 11.8 M9 9.3 L10.7 11.8" fill="none" stroke="#a9c5f5" stroke-width="1"/></svg>
<svg class="abs" style="left:1491px;top:730.1px" width="18" height="18" viewBox="0 0 18 18"><circle cx="9" cy="9" r="8.2" fill="#fff" stroke="#5d90f0" stroke-width="1.2"/><g transform="translate(9 9.3) scale(1.28) translate(-9.15 -8.4)"><path d="M4.9 7.2 a1.8 1.8 0 1 1 3.5 .6 c-.3 1.7 -1.4 3 -3 3.6 l-.4 -.8 c.8 -.4 1.4 -1 1.6 -1.7 a1.8 1.8 0 0 1 -1.7 -1.7 z M9.9 7.2 a1.8 1.8 0 1 1 3.5 .6 c-.3 1.7 -1.4 3 -3 3.6 l-.4 -.8 c.8 -.4 1.4 -1 1.6 -1.7 a1.8 1.8 0 0 1 -1.7 -1.7 z" fill="#2f6fee"/></g></svg>
<div class="row g" style="top:776.8px;height:75.0px"></div>
<div class="cb" style="left:354.5px;top:808.0px"></div><div class="no" style="top:805.0px">5</div>
<div class="tt" style="top:790.0px"><span style="letter-spacing:1.229px">Model establishment and risk management model of</span><br><span style="letter-spacing:1.161px">industrial big data based on neural network</span></div>
<div class="au" style="top:802.3px"><span style="letter-spacing:0.094px">Zhihan Jiang</span></div>
<div class="cf" style="top:802.3px;color:#777;letter-spacing:.5px">4th In</div>
<div class="abs" style="left:1141px;top:807.5px;width:17px;height:17px;border-radius:9px;background:#f6f7f9;box-shadow:0 0 2px rgba(0,0,0,.22)"></div><svg class="abs" style="left:1146px;top:811.0px" width="7" height="10" viewBox="0 0 7 10"><path d="M1.5 1.2 L5.2 5 L1.5 8.8" fill="none" stroke="#2a7fd0" stroke-width="1.7"/></svg>
<div class="dt" style="top:802.3px">2022-09-24</div>
<div class="dl" style="top:802.8px">6</div>
<svg class="abs" style="left:1404px;top:807.2px" width="18" height="18" viewBox="0 0 18 18"><g fill="none" stroke="#f8a324" stroke-linecap="round" stroke-linejoin="round"><path d="M9 0.8 V12.5" stroke-width="1.3"/><path d="M4.3 7.3 L9 12.6 L13.7 7.3" stroke-width="1.5"/><path d="M1.1 10.3 V12.6 a2.4 2.4 0 0 0 2.4 2.4 H14.5 a2.4 2.4 0 0 0 2.4 -2.4 V10.5" stroke-width="2.1"/></g></svg>
<svg class="abs" style="left:1433px;top:807.0px" width="18" height="18" viewBox="0 0 18 18"><path d="M2.2 1 H11.5 L15.8 5.2 V17 H2.2 Z" fill="#fff" stroke="#6b9df1" stroke-width="1.4" stroke-linejoin="round"/><path d="M11.2 1 L15.8 5.4 H11.2 Z" fill="#5b90ee"/><path d="M7 8 L4.6 10.3 L7 12.6 M11 8 L13.4 10.3 L11 12.6 M9.8 7.3 L8.2 13.3" fill="none" stroke="#7ba8f3" stroke-width="1.3"/></svg>
<svg class="abs" style="left:1461.2px;top:805.6px" width="18" height="18" viewBox="0 0 18 18"><path d="M9.00 1.60 L11.59 5.74 L16.32 6.92 L13.18 10.66 L13.53 15.53 L9.00 13.70 L4.47 15.53 L4.82 10.66 L1.68 6.92 L6.41 5.74 Z" fill="#dfeafb" stroke="#4079dd" stroke-width="1.8" stroke-linejoin="round"/><path d="M9 5.6 V9.3 M9 9.3 L6.2 8.4 M9 9.3 L11.8 8.4 M9 9.3 L7.3 11.8 M9 9.3 L10.7 11.8" fill="none" stroke="#a9c5f5" stroke-width="1"/></svg>
<svg class="abs" style="left:1491px;top:805.0px" width="18" height="18" viewBox="0 0 18 18"><circle cx="9" cy="9" r="8.2" fill="#fff" stroke="#5d90f0" stroke-width="1.2"/><g transform="translate(9 9.3) scale(1.28) translate(-9.15 -8.4)"><path d="M4.9 7.2 a1.8 1.8 0 1 1 3.5 .6 c-.3 1.7 -1.4 3 -3 3.6 l-.4 -.8 c.8 -.4 1.4 -1 1.6 -1.7 a1.8 1.8 0 0 1 -1.7 -1.7 z M9.9 7.2 a1.8 1.8 0 1 1 3.5 .6 c-.3 1.7 -1.4 3 -3 3.6 l-.4 -.8 c.8 -.4 1.4 -1 1.6 -1.7 a1.8 1.8 0 0 1 -1.7 -1.7 z" fill="#2f6fee"/></g></svg>
<div class="cb" style="left:354.5px;top:895.5px"></div><div class="no" style="top:892.5px">6</div>
<div class="tt" style="top:877.5px"><span style="letter-spacing:0.995px">Research on financial sharing model system under the</span><br><span style="letter-spacing:1.294px">background of big computer data</span></div>
<div class="au" style="top:864.8px"><span style="letter-spacing:0.113px">Wenna Guo; Yon</span><br><span style="letter-spacing:0.118px">g Yang; Daojian X</span><br><span style="letter-spacing:-0.378px">ia</span></div>
<div class="cf" style="top:889.8px;color:#777;letter-spacing:.5px">4th In</div>
<div class="abs" style="left:1141px;top:895.0px;width:17px;height:17px;border-radius:9px;background:#f6f7f9;box-shadow:0 0 2px rgba(0,0,0,.22)"></div><svg class="abs" style="left:1146px;top:898.5px" width="7" height="10" viewBox="0 0 7 10"><path d="M1.5 1.2 L5.2 5 L1.5 8.8" fill="none" stroke="#2a7fd0" stroke-width="1.7"/></svg>
<div class="dt" style="top:889.8px">2022-09-24</div>
<div class="dl" style="top:890.3px">68</div>
<svg class="abs" style="left:1404px;top:894.7px" width="18" height="18" viewBox="0 0 18 18"><g fill="none" stroke="#f8a324" stroke-linecap="round" stroke-linejoin="round"><path d="M9 0.8 V12.5" stroke-width="1.3"/><path d="M4.3 7.3 L9 12.6 L13.7 7.3" stroke-width="1.5"/><path d="M1.1 10.3 V12.6 a2.4 2.4 0 0 0 2.4 2.4 H14.5 a2.4 2.4 0 0 0 2.4 -2.4 V10.5" stroke-width="2.1"/></g></svg>
<svg class="abs" style="left:1433px;top:894.5px" width="18" height="18" viewBox="0 0 18 18"><path d="M2.2 1 H11.5 L15.8 5.2 V17 H2.2 Z" fill="#fff" stroke="#6b9df1" stroke-width="1.4" stroke-linejoin="round"/><path d="M11.2 1 L15.8 5.4 H11.2 Z" fill="#5b90ee"/><path d="M7 8 L4.6 10.3 L7 12.6 M11 8 L13.4 10.3 L11 12.6 M9.8 7.3 L8.2 13.3" fill="none" stroke="#7ba8f3" stroke-width="1.3"/></svg>
<svg class="abs" style="left:1461.2px;top:893.1px" width="18" height="18" viewBox="0 0 18 18"><path d="M9.00 1.60 L11.59 5.74 L16.32 6.92 L13.18 10.66 L13.53 15.53 L9.00 13.70 L4.47 15.53 L4.82 10.66 L1.68 6.92 L6.41 5.74 Z" fill="#dfeafb" stroke="#4079dd" stroke-width="1.8" stroke-linejoin="round"/><path d="M9 5.6 V9.3 M9 9.3 L6.2 8.4 M9 9.3 L11.8 8.4 M9 9.3 L7.3 11.8 M9 9.3 L10.7 11.8" fill="none" stroke="#a9c5f5" stroke-width="1"/></svg>
<svg class="abs" style="left:1491px;top:892.5px" width="18" height="18" viewBox="0 0 18 18"><circle cx="9" cy="9" r="8.2" fill="#fff" stroke="#5d90f0" stroke-width="1.2"/><g transform="translate(9 9.3) scale(1.28) translate(-9.15 -8.4)"><path d="M4.9 7.2 a1.8 1.8 0 1 1 3.5 .6 c-.3 1.7 -1.4 3 -3 3.6 l-.4 -.8 c.8 -.4 1.4 -1 1.6 -1.7 a1.8 1.8 0 0 1 -1.7 -1.7 z M9.9 7.2 a1.8 1.8 0 1 1 3.5 .6 c-.3 1.7 -1.4 3 -3 3.6 l-.4 -.8 c.8 -.4 1.4 -1 1.6 -1.7 a1.8 1.8 0 0 1 -1.7 -1.7 z" fill="#2f6fee"/></g></svg>
<div class="row g" style="top:951.8px;height:75.0px"></div>
<div class="cb" style="left:354.5px;top:983.0px"></div><div class="no" style="top:980.0px">7</div>
<div class="tt" style="top:965.0px"><span style="letter-spacing:1.014px">Research on empty container transportation based on(D,U)</span><br><span style="letter-spacing:1.252px">control strategy under random demand</span></div>
<div class="au" style="top:964.8px"><span style="letter-spacing:0.169px">XiaoLong Han; Qi</span><br><span style="letter-spacing:0.259px">Wang</span></div>
<div class="cf" style="top:977.3px;color:#777;letter-spacing:.5px">4th In</div>
<div class="abs" style="left:1141px;top:982.5px;width:17px;height:17px;border-radius:9px;background:#f6f7f9;box-shadow:0 0 2px rgba(0,0,0,.22)"></div><svg class="abs" style="left:1146px;top:986.0px" width="7" height="10" viewBox="0 0 7 10"><path d="M1.5 1.2 L5.2 5 L1.5 8.8" fill="none" stroke="#2a7fd0" stroke-width="1.7"/></svg>
<div class="dt" style="top:977.3px">2022-09-24</div>
<div class="dl" style="top:977.8px">4</div>
<svg class="abs" style="left:1404px;top:982.2px" width="18" height="18" viewBox="0 0 18 18"><g fill="none" stroke="#f8a324" stroke-linecap="round" stroke-linejoin="round"><path d="M9 0.8 V12.5" stroke-width="1.3"/><path d="M4.3 7.3 L9 12.6 L13.7 7.3" stroke-width="1.5"/><path d="M1.1 10.3 V12.6 a2.4 2.4 0 0 0 2.4 2.4 H14.5 a2.4 2.4 0 0 0 2.4 -2.4 V10.5" stroke-width="2.1"/></g></svg>
<svg class="abs" style="left:1433px;top:982.0px" width="18" height="18" viewBox="0 0 18 18"><path d="M1.2 4.6 a2.2 2.2 0 0 1 2.2 -2.2 H6.8 a2.2 2.2 0 0 1 2.2 2.2 a2.2 2.2 0 0 1 2.2 -2.2 H14.6 a2.2 2.2 0 0 1 2.2 2.2 V15.6 H10.6 L9 16.6 L7.4 15.6 H1.2 Z" fill="#fff" stroke="#6b9df1" stroke-width="1.5" stroke-linejoin="round"/><path d="M9 4.6 V16" stroke="#6b9df1" stroke-width="1.5"/></svg>
<svg class="abs" style="left:1461.2px;top:980.6px" width="18" height="18" viewBox="0 0 18 18"><path d="M9.00 1.60 L11.59 5.74 L16.32 6.92 L13.18 10.66 L13.53 15.53 L9.00 13.70 L4.47 15.53 L4.82 10.66 L1.68 6.92 L6.41 5.74 Z" fill="#dfeafb" stroke="#4079dd" stroke-width="1.8" stroke-linejoin="round"/><path d="M9 5.6 V9.3 M9 9.3 L6.2 8.4 M9 9.3 L11.8 8.4 M9 9.3 L7.3 11.8 M9 9.3 L10.7 11.8" fill="none" stroke="#a9c5f5" stroke-width="1"/></svg>
<svg class="abs" style="left:1491px;top:980.0px" width="18" height="18" viewBox="0 0 18 18"><circle cx="9" cy="9" r="8.2" fill="#fff" stroke="#5d90f0" stroke-width="1.2"/><g transform="translate(9 9.3) scale(1.28) translate(-9.15 -8.4)"><path d="M4.9 7.2 a1.8 1.8 0 1 1 3.5 .6 c-.3 1.7 -1.4 3 -3 3.6 l-.4 -.8 c.8 -.4 1.4 -1 1.6 -1.7 a1.8 1.8 0 0 1 -1.7 -1.7 z M9.9 7.2 a1.8 1.8 0 1 1 3.5 .6 c-.3 1.7 -1.4 3 -3 3.6 l-.4 -.8 c.8 -.4 1.4 -1 1.6 -1.7 a1.8 1.8 0 0 1 -1.7 -1.7 z" fill="#2f6fee"/></g></svg>
</body>
</html>
